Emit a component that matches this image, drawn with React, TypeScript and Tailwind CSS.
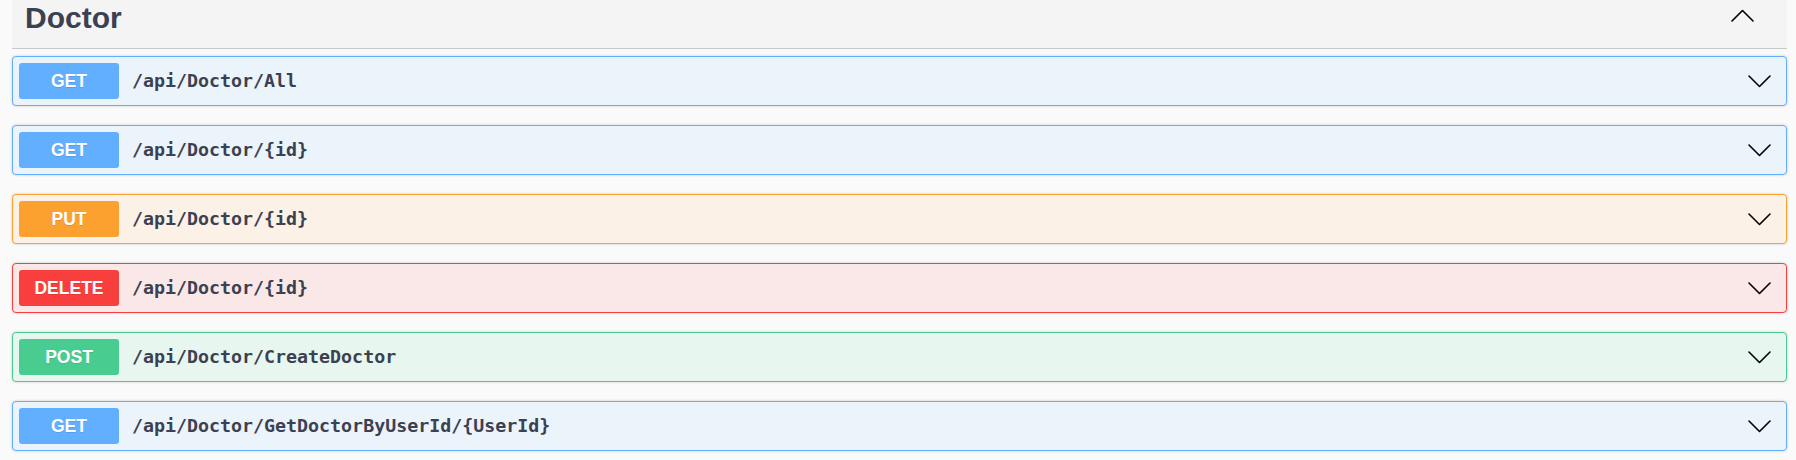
import React from "react";

type Op = { method: string; path: string; badge: string; row: string };

const ops: Op[] = [
  { method: "GET", path: "/api/Doctor/All", badge: "bg-[#61affe]", row: "bg-[#ebf3fb] border-[#61affe]" },
  { method: "GET", path: "/api/Doctor/{id}", badge: "bg-[#61affe]", row: "bg-[#ebf3fb] border-[#61affe]" },
  { method: "PUT", path: "/api/Doctor/{id}", badge: "bg-[#fca130]", row: "bg-[#fbf1e6] border-[#fca130]" },
  { method: "DELETE", path: "/api/Doctor/{id}", badge: "bg-[#f93e3e]", row: "bg-[#fae7e7] border-[#f93e3e]" },
  { method: "POST", path: "/api/Doctor/CreateDoctor", badge: "bg-[#49cc90]", row: "bg-[#e8f6f0] border-[#49cc90]" },
  { method: "GET", path: "/api/Doctor/GetDoctorByUserId/{UserId}", badge: "bg-[#61affe]", row: "bg-[#ebf3fb] border-[#61affe]" },
];

function Chevron({ up }: { up?: boolean }) {
  return (
    <svg width="23" height="13" viewBox="0 0 23 13" fill="none">
      <polyline
        points={up ? "1,12 11.5,1.5 22,12" : "1,1 11.5,11.5 22,1"}
        stroke="#000"
        strokeWidth="1.6"
        strokeLinecap="round"
        strokeLinejoin="round"
      />
    </svg>
  );
}

export default function App() {
  return (
    <div className="w-full h-[460px] bg-[#fafafa] pl-[12px] pr-[9px] overflow-hidden">
      <div className="h-[49px] bg-[#f4f4f4] border-b border-[#c6c7cb] flex items-start justify-between pl-[13px] pr-[33px]">
        <h2
          className="pt-[3px] text-[30px] leading-[30px] font-bold text-[#3b4151]"
          style={{ fontFamily: '"Liberation Sans", Arial, sans-serif' }}
        >
          Doctor
        </h2>
        <div className="pt-[9px]">
          <Chevron up />
        </div>
      </div>
      <div className="mt-[7px] flex flex-col gap-[19px]">
        {ops.map((op, i) => (
          <div
            key={i}
            className={`h-[50px] border rounded-[4px] shadow-[0_0_3px_rgba(0,0,0,0.19)] flex items-center pl-[6px] pr-[15px] ${op.row}`}
          >
            <div
              className={`w-[100px] h-[36px] rounded-[3px] flex items-center justify-center text-white font-bold text-[17.5px] [text-shadow:0_1px_0_rgba(0,0,0,0.1)] ${op.badge}`}
              style={{ fontFamily: '"Liberation Sans", Arial, sans-serif' }}
            >
              {op.method}
            </div>
            <div
              className="ml-[13px] text-[18.3px] font-bold text-[#3b4151] flex-1"
              style={{ fontFamily: '"DejaVu Sans Mono", monospace' }}
            >
              {op.path}
            </div>
            <Chevron />
          </div>
        ))}
      </div>
    </div>
  );
}
